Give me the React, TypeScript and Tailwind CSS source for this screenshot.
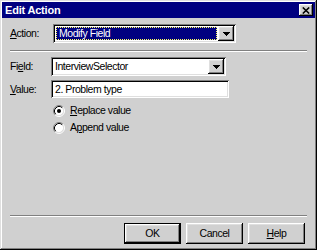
import React from "react";

const raised =
  "shadow-[inset_-1px_-1px_0_#000,inset_1px_1px_0_#fff,inset_-2px_-2px_0_#808080,inset_2px_2px_0_#dfdfdf]";

function Arrow() {
  return (
    <svg width="7" height="4" viewBox="0 0 7 4" shapeRendering="crispEdges">
      <rect x="0" y="0" width="7" height="1" fill="#000" />
      <rect x="1" y="1" width="5" height="1" fill="#000" />
      <rect x="2" y="2" width="3" height="1" fill="#000" />
      <rect x="3" y="3" width="1" height="1" fill="#000" />
    </svg>
  );
}

function Radio({ checked }: { checked?: boolean }) {
  return (
    <svg width="12" height="12" viewBox="0 0 12 12" className="shrink-0">
      <circle cx="6" cy="6" r="4.5" fill="#fff" />
      <path d="M2.11 9.89A5.5 5.5 0 0 1 9.89 2.11" stroke="#808080" fill="none" />
      <path d="M9.89 2.11A5.5 5.5 0 0 1 2.11 9.89" stroke="#fff" fill="none" />
      <path d="M2.82 9.18A4.5 4.5 0 0 1 9.18 2.82" stroke="#000" fill="none" />
      <path d="M9.18 2.82A4.5 4.5 0 0 1 2.82 9.18" stroke="#dfdfdf" fill="none" />
      {checked && <circle cx="6" cy="6" r="2" fill="#000" />}
    </svg>
  );
}

function Combo({
  value,
  width,
  active,
}: {
  value: string;
  width: string;
  active?: boolean;
}) {
  return (
    <div
      className={`flex h-[19px] ${width} bg-white p-[2px] shadow-[inset_1px_1px_0_#808080,inset_-1px_-1px_0_#fff,inset_2px_2px_0_#000,inset_-2px_-2px_0_#dfdfdf]`}
    >
      {active ? (
        <div className="m-[1px] flex flex-1 items-center border border-dotted border-[#ffff60] bg-[#000080] px-[2px] text-white">
          {value}
        </div>
      ) : (
        <div className="flex flex-1 items-center px-[2px]">{value}</div>
      )}
      <div
        className={`flex w-[16px] items-center justify-center bg-[#d0d0d0] ${raised}`}
      >
        <Arrow />
      </div>
    </div>
  );
}

function Separator() {
  return (
    <div className="flex flex-col">
      <div className="h-[1px] bg-[#808080]" />
      <div className="h-[1px] bg-white" />
    </div>
  );
}

function Button({
  children,
  isDefault,
}: {
  children: React.ReactNode;
  isDefault?: boolean;
}) {
  if (isDefault) {
    return (
      <div className="flex h-[21px] w-[57px] border border-black">
        <div className={`flex flex-1 items-center justify-center ${raised}`}>
          {children}
        </div>
      </div>
    );
  }
  return (
    <div
      className={`flex h-[21px] w-[57px] items-center justify-center ${raised}`}
    >
      {children}
    </div>
  );
}

export default function App() {
  return (
    <div className="flex h-[250px] w-[317px] flex-col bg-[#d0d0d0] p-[2px] text-[10.5px] leading-none tracking-[-0.45px] text-black font-['Liberation_Sans',Arial,sans-serif] shadow-[inset_-1px_-1px_0_#000,inset_1px_1px_0_#dfdfdf,inset_-2px_-2px_0_#808080,inset_2px_2px_0_#fff]">
      {/* title bar */}
      <div className="flex h-[16px] items-center justify-between bg-[#000080] pl-[3px] pr-[2px]">
        <span className="text-[11px] font-bold tracking-[-0.2px] text-white">
          Edit Action
        </span>
        <div
          className={`flex h-[12px] w-[14px] items-center justify-center bg-[#d0d0d0] ${raised}`}
        >
          <svg width="8" height="7" viewBox="0 0 8 7">
            <path
              d="M0.8 0.5L7.2 6.5M7.2 0.5L0.8 6.5"
              stroke="#000"
              strokeWidth="1.6"
            />
          </svg>
        </div>
      </div>

      <div className="flex flex-1 flex-col px-[8px]">
        {/* action */}
        <div className="mt-[6px] flex items-center">
          <span className="w-[43px]">
            <span className="underline underline-offset-[1px]">A</span>ction:
          </span>
          <Combo value="Modify Field" width="w-[183px]" active />
        </div>

        <div className="mt-[7px]">
          <Separator />
        </div>

        {/* field */}
        <div className="mt-[5px] flex items-center">
          <span className="w-[41px]">
            Fi<span className="underline underline-offset-[1px]">e</span>ld:
          </span>
          <Combo value="InterviewSelector" width="w-[175px]" />
        </div>

        {/* value */}
        <div className="mt-[4px] flex items-center">
          <span className="w-[41px]">
            <span className="underline underline-offset-[1px]">V</span>alue:
          </span>
          <div className="flex h-[18px] w-[178px] items-center bg-white px-[4px] shadow-[inset_1px_1px_0_#808080,inset_-1px_-1px_0_#fff,inset_2px_2px_0_#000,inset_-2px_-2px_0_#dfdfdf]">
            2. Problem type
          </div>
        </div>

        {/* radios */}
        <div className="mt-[4px] flex flex-col pl-[43px]">
          <div className="flex h-[17px] items-center gap-[5px]">
            <Radio checked />
            <span>
              <span className="underline underline-offset-[1px]">R</span>eplace
              value
            </span>
          </div>
          <div className="flex h-[17px] items-center gap-[5px]">
            <Radio />
            <span>
              A<span className="underline underline-offset-[1px]">p</span>pend
              value
            </span>
          </div>
        </div>

        <div className="mt-auto">
          <Separator />
        </div>

        {/* buttons */}
        <div className="mt-[6px] mb-[4px] flex justify-end gap-[5px] pr-[2px]">
          <Button isDefault>OK</Button>
          <Button>Cancel</Button>
          <Button>
            <span>
              <span className="underline underline-offset-[1px]">H</span>elp
            </span>
          </Button>
        </div>
      </div>
    </div>
  );
}
